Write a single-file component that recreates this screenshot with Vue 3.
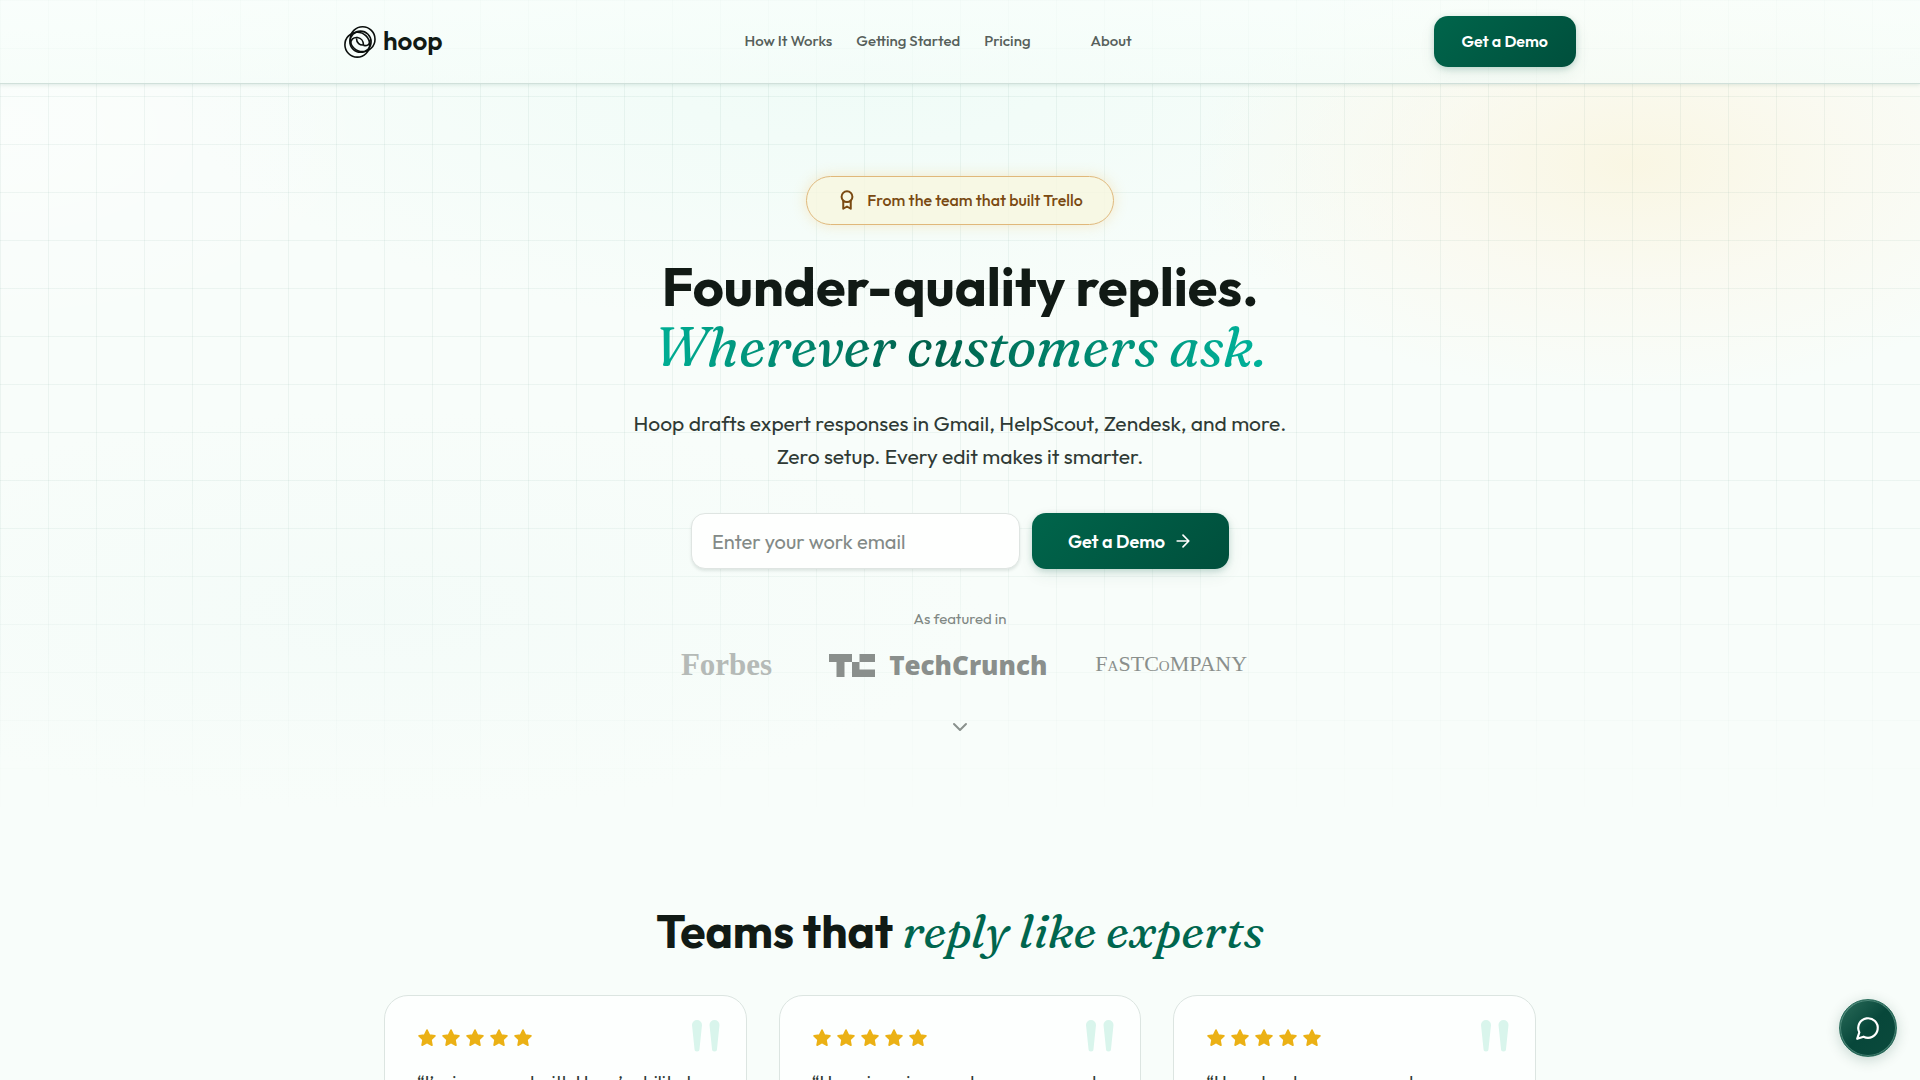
<script setup>
import { ref } from 'vue'

const email = ref('')
const links = ['How It Works', 'Getting Started', 'Pricing', '', 'About']
const quotes = [
  '“I’m impressed with Hoop’s ability to draft replies that sound just like our team.”',
  '“Hoop is a nice way to answer people and keep every reply consistent.”',
  '“Hoop has been a game changer. Responses go out faster than ever.”'
]
const star = 'M12 2.5l2.9 6 6.6.9-4.8 4.6 1.2 6.6L12 17.4l-5.900 3.200 1.200-6.600L2.500 9.400l6.600-.9z'
</script>

<template>
  <div class="page">
    <header class="header">
      <div class="bar">
        <a href="#" class="brand" aria-label="hoop">
          <svg width="32" height="32" viewBox="0 0 32 32" fill="none" stroke="#0b0f0d" stroke-width="1.6">
            <circle cx="18.600" cy="13.200" r="12.400" />
            <circle cx="13.300" cy="18.700" r="12.400" />
            <circle cx="16.500" cy="15.700" r="10.600" />
            <path d="M6.500 18c0-4.500 3-7 7-6.500 3.500.5 6 3.500 6 7.500-3.500.5-7-2-7-6.500" />
            <path d="M26 14.500c0 4.500-3 5.500-6.500 5" />
          </svg>
          <span>hoop</span>
        </a>
        <nav class="nav">
          <a v-for="(l, i) in links" :key="i" href="#" :class="{ blank: !l }">{{ l }}</a>
        </nav>
        <button class="cta small" type="button">Get a Demo</button>
      </div>
    </header>

    <main>
      <section class="hero">
        <p class="badge">
          <svg width="20" height="20" viewBox="0 0 24 24" fill="none" stroke="currentColor" stroke-width="2.4" stroke-linecap="round" stroke-linejoin="round">
            <circle cx="12" cy="8" r="6.500" />
            <path d="M7.500 13v9.500l4.500-2.700 4.500 2.700V13" />
          </svg>
          <span>From the team that built Trello</span>
        </p>
        <h1>
          <span class="line">Founder-quality replies.</span>
          <em class="line">Wherever customers ask.</em>
        </h1>
        <p class="lead">Hoop drafts expert responses in Gmail, HelpScout, Zendesk, and more.<br />Zero setup. Every edit makes it smarter.</p>
        <form class="signup" @submit.prevent>
          <input v-model="email" type="email" placeholder="Enter your work email" aria-label="Work email" />
          <button class="cta" type="submit">
            Get a Demo
            <svg width="20" height="20" viewBox="0 0 24 24" fill="none" stroke="currentColor" stroke-width="2" stroke-linecap="round" stroke-linejoin="round">
              <path d="M5 12h14M12 5l7 7-7 7" />
            </svg>
          </button>
        </form>
        <p class="featured">As featured in</p>
        <div class="press">
          <span class="forbes">Forbes</span>
          <span class="tc">
            <svg width="46" height="23" viewBox="0 0 46 23" fill="currentColor">
              <path d="M0 0h23v8h-7.500v15h-8V8H0z" />
              <path d="M30.500 0H46v8H30.500zM23 8h7.500v7.500H46V23H23z" />
            </svg>
            <span>TechCrunch</span>
          </span>
          <span class="fast">F<small>A</small>STC<small>O</small>MPANY</span>
        </div>
        <svg class="down" width="24" height="24" viewBox="0 0 24 24" fill="none" stroke="currentColor" stroke-width="2" stroke-linecap="round" stroke-linejoin="round">
          <path d="M6 9l6 6 6-6" />
        </svg>
      </section>

      <section class="teams">
        <h2>Teams that <em>reply like experts</em></h2>
        <div class="cards">
          <article v-for="q in quotes" :key="q" class="card">
            <svg class="mark" width="28" height="32" viewBox="0 0 28 32" fill="#d9f5ec" aria-hidden="true">
              <path d="M0 5a5 5 0 0 1 10 0L7.500 29a2.500 2.500 0 0 1-5 0z" />
              <path d="M17.500 5a5 5 0 0 1 10 0L25 29a2.500 2.500 0 0 1-5 0z" />
            </svg>
            <div class="stars">
              <svg v-for="n in 5" :key="n" width="20" height="20" viewBox="0 0 24 24" fill="#ebb115" stroke="#ebb115" stroke-width="2" stroke-linejoin="round">
                <path :d="star" />
              </svg>
            </div>
            <p>{{ q }}</p>
          </article>
        </div>
      </section>
    </main>

    <button class="chat" type="button" aria-label="Open chat">
      <svg width="26" height="26" viewBox="0 0 24 24" fill="none" stroke="currentColor" stroke-width="2" stroke-linecap="round" stroke-linejoin="round">
        <path d="M7.900 20A9 9 0 1 0 4 16.100L2 22z" />
      </svg>
    </button>
  </div>
</template>

<style>
body {
  margin: 0;
  background: #f8fdfa;
}
</style>

<style scoped>
* {
  box-sizing: border-box;
}
.page {
  position: relative;
  height: 100vh;
  overflow: hidden;
  font-family: Outfit, Lato, sans-serif;
  color: #111a15;
}
p, h1, h2 {
  margin: 0;
}
a {
  color: inherit;
  text-decoration: none;
}
.header {
  height: 84px;
  border-bottom: 1px solid #d0e0da;
  box-shadow: 0 1px 4px rgba(0, 80, 60, 0.12);
  background: linear-gradient(rgba(249, 255, 252, 0.7), rgba(245, 253, 249, 0.7));
  position: relative;
  z-index: 2;
}
.bar {
  max-width: 1280px;
  height: 100%;
  margin: 0 auto;
  padding: 0 24px;
  display: flex;
  align-items: center;
  justify-content: space-between;
}
.brand {
  display: flex;
  align-items: center;
  gap: 7px;
  font-size: 26px;
  line-height: 32px;
  font-weight: 600;
}
.brand span {
  padding-bottom: 2px;
}
.nav {
  display: flex;
  gap: 24px;
  padding-bottom: 2px;
  font-size: 15px;
  line-height: 20px;
  font-weight: 500;
  color: #56605b;
}
.blank {
  width: 12px;
}
.cta {
  height: 56px;
  padding: 0 36px;
  border: 0;
  border-radius: 14px;
  display: flex;
  align-items: center;
  gap: 8px;
  font-family: inherit;
  font-size: 18px;
  font-weight: 600;
  color: #fff;
  background: linear-gradient(135deg, #00654b, #004f3c);
  box-shadow: 0 2px 6px rgba(0, 90, 68, 0.2), 0 6px 16px rgba(0, 90, 68, 0.08);
}
.small {
  height: 51px;
  padding: 0 28px 2px;
  font-size: 16px;
}
.hero {
  margin-top: -84px;
  padding: 176px 0 80px;
  display: flex;
  flex-direction: column;
  align-items: center;
  text-align: center;
  position: relative;
  background:
    radial-gradient(ellipse 440px 230px at 85% 165px, rgba(250, 244, 220, 0.75), rgba(252, 246, 230, 0.45) 50%, transparent),
    radial-gradient(ellipse 700px 260px at 45% 70px, rgba(236, 251, 246, 0.7), transparent),
    radial-gradient(ellipse 600px 200px at 20% 610px, rgba(240, 250, 247, 0.5), transparent),
    radial-gradient(ellipse 420px 220px at 0% 130px, rgba(255, 255, 255, 0.4), transparent);
}
.hero::before {
  content: '';
  position: absolute;
  inset: 0;
  background:
    linear-gradient(90deg, rgba(0, 80, 60, 0.05) 1px, transparent 1px) 0 0 / 48px 48px,
    linear-gradient(rgba(0, 80, 60, 0.05) 1px, transparent 1px) 0 0 / 48px 48px;
  mask-image: linear-gradient(#000 60%, transparent);
}
.hero > * {
  position: relative;
}
.badge {
  height: 49px;
  padding: 0 30px 2px;
  border: 1px solid #e0b87a;
  border-radius: 25px;
  display: flex;
  align-items: center;
  gap: 10px;
  font-size: 16px;
  font-weight: 500;
  color: #7a4a12;
  background: rgba(248, 246, 222, 0.8);
  box-shadow: 0 0 14px rgba(245, 190, 90, 0.3);
}
h1 {
  margin-top: 31px;
  font-size: 54px;
  line-height: 60px;
  font-weight: 700;
}
.line {
  display: block;
}
em {
  font-family: Fraunces, 'Liberation Serif', serif;
  font-weight: 500;
}
h1 em {
  font-size: 55px;
  color: transparent;
  background: linear-gradient(90deg, #00b096, #00604a 45%, #008068 65%, #00b49c);
  background-clip: text;
}
.lead {
  margin-top: 31px;
  font-size: 21px;
  line-height: 33px;
  font-weight: 400;
  color: #2f3a35;
}
.signup {
  margin-top: 40px;
  display: flex;
  gap: 12px;
}
.signup input {
  width: 329px;
  height: 56px;
  padding: 0 20px;
  border: 1px solid #dfe5e2;
  border-radius: 14px;
  font-family: inherit;
  font-size: 20px;
  color: #111a15;
  background: #fefffe;
  box-shadow: 0 2px 3px rgba(0, 40, 30, 0.1);
}
.signup input::placeholder {
  color: #838a87;
}
.featured {
  margin-top: 40px;
  font-size: 15px;
  line-height: 20px;
  font-weight: 400;
  color: #7f8783;
}
.press {
  margin-top: 20px;
  padding-left: 8px;
  height: 32px;
  display: flex;
  align-items: center;
  color: #8a8f8c;
}
.forbes {
  margin-right: 57px;
  font: 700 31px/32px 'Liberation Serif', serif;
  color: #b5bab7;
}
.tc {
  margin-right: 48px;
  display: flex;
  align-items: center;
  gap: 14px;
  font: 800 26px/32px 'Open Sans', sans-serif;
}
.fast {
  font: 400 22px/32px 'Liberation Serif', serif;
}
.fast small {
  font-size: 15px;
}
.down {
  margin-top: 34px;
  color: #8a918d;
}
.teams {
  max-width: 1200px;
  margin: 0 auto;
  padding: 82px 24px 0;
}
h2 {
  font-size: 46px;
  line-height: 60px;
  font-weight: 700;
  text-align: center;
}
h2 em {
  font-size: 47px;
  color: #00664e;
}
.cards {
  margin-top: 34px;
  display: grid;
  grid-template-columns: repeat(3, 1fr);
  gap: 32px;
}
.card {
  position: relative;
  min-height: 240px;
  padding: 32px;
  border: 1px solid #dce5e1;
  border-radius: 24px;
  background: #fdfffe;
}
.card p {
  margin-top: 20px;
  font-size: 18px;
  line-height: 30px;
  color: #2f3a35;
}
.mark {
  position: absolute;
  top: 24px;
  right: 26px;
}
.stars {
  display: flex;
  gap: 4px;
}
.chat {
  position: fixed;
  right: 23px;
  bottom: 23px;
  z-index: 3;
  width: 58px;
  height: 58px;
  padding: 0;
  border: 1px solid #2d6f5e;
  border-radius: 50%;
  display: grid;
  place-items: center;
  color: #fff;
  background: linear-gradient(135deg, #2c6d5b, #07473a 50%, #0b4a3c);
  box-shadow: inset 0 0 0 1px rgba(140, 190, 175, 0.5), 0 3px 14px rgba(0, 60, 45, 0.2);
}
</style>
